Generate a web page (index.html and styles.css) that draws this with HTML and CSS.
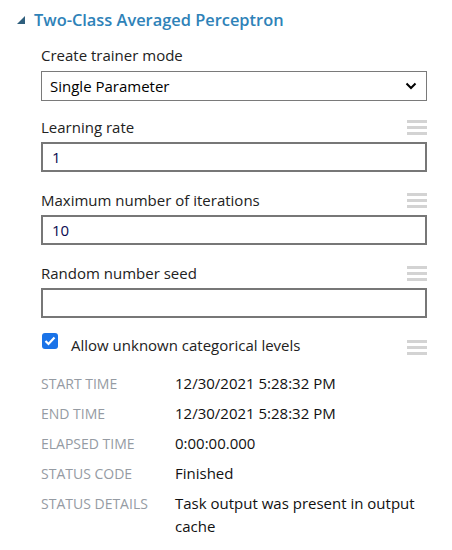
FILE: index.html
```html
<!DOCTYPE html>
<html>
<head>
<meta charset="utf-8">
<link rel="stylesheet" href="styles.css">
</head>
<body>
<div class="panel">
  <div class="title">
    <svg class="caret" width="8" height="8" viewBox="0 0 8 8"><polygon points="8,0 8,8 0,8" fill="#2f5f7d"/></svg>
    <span>Two-Class Averaged Perceptron</span>
  </div>
  <div class="params">
    <div class="field first">
      <div class="label-row"><span class="label">Create trainer mode</span></div>
      <div class="select">
        <span>Single Parameter</span>
        <svg width="12" height="8" viewBox="0 0 12 8"><polyline points="1.5,1.5 6,6 10.5,1.5" fill="none" stroke="#000" stroke-width="2"/></svg>
      </div>
    </div>
    <div class="field">
      <div class="label-row"><span class="label">Learning rate</span><span class="grip"><i></i><i></i><i></i></span></div>
      <div class="input">1</div>
    </div>
    <div class="field">
      <div class="label-row"><span class="label">Maximum number of iterations</span><span class="grip"><i></i><i></i><i></i></span></div>
      <div class="input">10</div>
    </div>
    <div class="field">
      <div class="label-row"><span class="label">Random number seed</span><span class="grip"><i></i><i></i><i></i></span></div>
      <div class="input"></div>
    </div>
    <div class="check-row">
      <span class="checkbox"><svg width="12" height="10" viewBox="0 0 12 10"><polyline points="1.5,5 4.5,8 10.5,1.5" fill="none" stroke="#fff" stroke-width="2.2"/></svg></span>
      <span class="label">Allow unknown categorical levels</span>
      <span class="grip"><i></i><i></i><i></i></span>
    </div>
    <div class="info">
      <div class="k">START TIME</div><div class="v">12/30/2021 5:28:32 PM</div>
      <div class="k">END TIME</div><div class="v">12/30/2021 5:28:32 PM</div>
      <div class="k">ELAPSED TIME</div><div class="v">0:00:00.000</div>
      <div class="k">STATUS CODE</div><div class="v">Finished</div>
      <div class="k">STATUS DETAILS</div><div class="v">Task output was present in output cache</div>
    </div>
  </div>
</div>
</body>
</html>
```

FILE: styles.css
```css
* { box-sizing: border-box; }
body {
  margin: 0;
  background: #fff;
  font-family: "Open Sans", "Noto Sans", sans-serif;
  color: #222;
}
.panel { width: 452px; height: 550px; }
.title {
  display: flex;
  align-items: center;
  height: 38px;
  padding-left: 17px;
  color: #2e82b8;
  font-size: 16.4px;
  font-weight: 600;
}
.caret { margin-right: 9px; margin-top: 1px; }
.params { padding: 0 25px 0 41px; }
.field { margin-top: 18px; }
.field.first { margin-top: 7px; }
.field.first .label-row { margin-bottom: 6px; }
.field.first + .field { margin-top: 16px; }
.label-row {
  display: flex;
  justify-content: space-between;
  align-items: center;
  height: 20px;
  margin-bottom: 5px;
}
.label { font-size: 15px; color: #222; }
.grip { display: flex; flex-direction: column; gap: 3px; width: 20px; }
.grip i { display: block; height: 3px; background: #d3d3d3; }
.select {
  height: 30px;
  border: 1px solid #7a7a7a;
  display: flex;
  align-items: center;
  justify-content: space-between;
  padding: 0 9px 0 8px;
  font-size: 15px;
  color: #000;
}
.input {
  height: 30px;
  border: 2px solid #777;
  padding: 0 9px;
  display: flex;
  align-items: center;
  font-size: 15px;
  color: #0a0a50;
}
.check-row {
  display: flex;
  align-items: center;
  margin-top: 14px;
  height: 22px;
}
.checkbox {
  width: 16px; height: 16px;
  border-radius: 3px;
  background: #1a73e8;
  display: flex; align-items: center; justify-content: center;
  margin-left: 1px;
  margin-right: 13px;
  margin-top: -4px;
}
.check-row .label { margin-top: 4px; }
.check-row .grip { margin-left: auto; margin-top: 8px; }
.info {
  display: grid;
  grid-template-columns: 134px 1fr;
  row-gap: 7px;
  margin-top: 18px;
  font-size: 15px;
  line-height: 23px;
}
.k { color: #959ba3; font-size: 14px; }
.v { color: #111; }
```
